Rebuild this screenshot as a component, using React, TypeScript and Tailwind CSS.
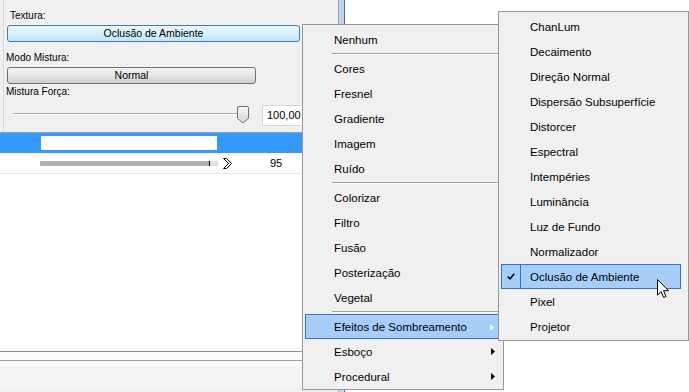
import React from "react";

const mainItems: (string | null)[] = [
  "Nenhum",
  null,
  "Cores",
  "Fresnel",
  "Gradiente",
  "Imagem",
  "Ruído",
  null,
  "Colorizar",
  "Filtro",
  "Fusão",
  "Posterização",
  "Vegetal",
  null,
  "Efeitos de Sombreamento",
  "Esboço",
  "Procedural",
];

const withArrow = ["Efeitos de Sombreamento", "Esboço", "Procedural"];

const subItems = [
  "ChanLum",
  "Decaimento",
  "Direção Normal",
  "Dispersão Subsuperfície",
  "Distorcer",
  "Espectral",
  "Intempéries",
  "Luminância",
  "Luz de Fundo",
  "Normalizador",
  "Oclusão de Ambiente",
  "Pixel",
  "Projetor",
];

const Arrow = ({ light }: { light?: boolean }) => (
  <svg width="4" height="7" viewBox="0 0 4 7" className="absolute right-[4px] top-[9px]">
    <polygon points="0,0 4,3.5 0,7" fill={light ? "#f6f6f6" : "#000000"} />
  </svg>
);

const MainMenu = () => (
  <div className="absolute left-[302px] top-[24px] w-[202px] h-[366px] bg-[#f0f0f0] border border-[#979797] pt-[2px] pl-[2px] pr-[2px]">
    {mainItems.map((item, i) =>
      item === null ? (
        <div key={i} className="h-[4px] flex flex-col justify-center ml-[27px] mr-[2px]">
          <div className="h-px bg-[#a0a0a0]" />
          <div className="h-px bg-white" />
        </div>
      ) : item === "Efeitos de Sombreamento" ? (
        <div
          key={i}
          className="relative h-[25px] w-[194px] flex items-center pt-[3px] pl-[28px] bg-[#a6cef8] border border-[#2f74c9] text-black"
        >
          {item}
          <Arrow light />
        </div>
      ) : (
        <div key={i} className="relative h-[25px] w-[194px] flex items-center pt-[3px] pl-[29px] text-black">
          {item}
          {withArrow.includes(item) && <Arrow />}
        </div>
      )
    )}
  </div>
);

const SubMenu = () => (
  <div className="absolute left-[498px] top-[11px] w-[191px] h-[330px] bg-[#f0f0f0] border border-[#979797] pt-[2px] pl-[2px]">
    {subItems.map((item) =>
      item === "Oclusão de Ambiente" ? (
        <div
          key={item}
          className="relative h-[25px] w-[180px] flex items-center pt-[3px] pl-[28px] bg-[#a6cef8] border border-[#2f74c9] text-black"
        >
          <div className="absolute left-0 top-0 bottom-0 w-[19px] border-r border-[#2f74c9] flex items-center justify-center">
            <svg width="8" height="7" viewBox="0 0 8 7">
              <path d="M0.8 3.6 L3 5.8 L7.2 0.8" fill="none" stroke="#000" strokeWidth="1.6" />
            </svg>
          </div>
          {item}
        </div>
      ) : (
        <div key={item} className="h-[25px] w-[180px] flex items-center pt-[3px] pl-[29px] text-black">
          {item}
        </div>
      )
    )}
  </div>
);

const Cursor = () => (
  <svg width="13" height="20" viewBox="0 0 13 20" className="absolute left-[657px] top-[279px]">
    <path
      d="M0.5 0.5 L0.5 16 L4.2 12.6 L6.7 18.5 L9 17.5 L6.6 11.7 L11.5 11.7 Z"
      fill="#ffffff"
      stroke="#000000"
      strokeWidth="1"
      strokeLinejoin="miter"
    />
  </svg>
);

const SliderThumb = () => (
  <svg width="12" height="18" viewBox="0 0 12 18" className="self-start mt-[1px]">
    <defs>
      <linearGradient id="thumb" x1="0" y1="0" x2="0" y2="1">
        <stop offset="0" stopColor="#f6f6f6" />
        <stop offset="1" stopColor="#d4d4d4" />
      </linearGradient>
    </defs>
    <path
      d="M0.5 2 Q0.5 0.5 2 0.5 H10 Q11.5 0.5 11.5 2 V12.5 L6 17 L0.5 12.5 Z"
      fill="url(#thumb)"
      stroke="#707070"
    />
  </svg>
);

const Chevron = () => (
  <svg width="9" height="11" viewBox="0 0 9 11">
    <path d="M0.5 0.5 H3.5 L8.5 5.5 L3.5 10.5 H0.5 L5.5 5.5 Z" fill="#ffffff" stroke="#000" />
    <path d="M2.5 2.5 L5.5 5.5 L2.5 8.5" fill="none" stroke="#000" />
  </svg>
);

export default function App() {
  return (
    <div className="relative w-[689px] h-[392px] overflow-hidden bg-white font-['Liberation_Sans',Arial,sans-serif] text-[11.5px] flex">
      <div className="w-[338px] h-full flex flex-col">
        <div className="h-[132px] bg-[#f0f0f0] pl-[3px]">
          <div className="h-full border-l border-[#d9d9d9] text-[10px] text-black">
            <div className="ml-[6px] pt-[10px] h-[21px] leading-[12px]">Textura:</div>
            <div className="ml-[3px] mt-[4px] w-[293px] h-[17px] rounded-[3px] border border-[#3c7fb1] bg-gradient-to-b from-[#eaf6fd] via-[#d9f0fc] to-[#bee6fd] flex items-center justify-center text-[10.5px]">
              Oclusão de Ambiente
            </div>
            <div className="ml-[2px] mt-[9px] pt-[1px] h-[12px] leading-[12px]">Modo Mistura:</div>
            <div className="ml-[3px] mt-[4px] w-[249px] h-[17px] rounded-[3px] border border-[#707070] bg-gradient-to-b from-[#f2f2f2] via-[#e6e6e6] to-[#cfcfcf] flex items-center justify-center text-[10.5px]">
              Normal
            </div>
            <div className="ml-[2px] mt-[1px] pt-[1px] h-[12px] leading-[12px]">Mistura Força:</div>
            <div className="flex mt-[8px] h-[21px]">
              <div className="ml-[9px] mt-[8px] w-[224px] h-[2px] border-t border-[#a8a8a8] border-b border-b-white self-start" />
              <SliderThumb />
              <div className="ml-[13px] w-[60px] h-[21px] bg-white border border-[#d5d5d5] flex items-center pl-[4px] text-[11px]">
                100,00
              </div>
            </div>
          </div>
        </div>
        <div className="border-t border-[#a0a0a0]">
          <div className="h-[20px] bg-[#3399ff] pt-[3px]">
            <div className="ml-[41px] w-[176px] h-[14px] bg-white" />
          </div>
          <div className="h-[21px] border-b border-[#e5e5e5] flex items-center text-[11px]">
            <div className="ml-[40px] w-[178px] h-[5px] flex">
              <div className="w-[169px] bg-[#b0b0b0]" />
              <div className="w-px bg-black" />
              <div className="flex-1 bg-[#e0e0e0]" />
            </div>
            <div className="ml-[5px] flex">
              <Chevron />
            </div>
            <div className="ml-[38px]">95</div>
          </div>
        </div>
        <div className="flex-1 bg-white" />
        <div className="border-t border-[#8f8f8f] h-[8px] bg-[#fbfbfb] box-content" />
        <div className="border-t border-[#a0a0a0] h-[5px] bg-white box-content" />
        <div className="h-[22px] bg-[#f4f4f4]" />
        <div className="h-[4px] bg-[#f0f0f0]" />
      </div>
      <div className="w-[7px] h-full bg-[#bfd2ec] border-l border-[#9aa7b8] border-r border-r-[#5d6b80]" />
      <div className="flex-1 bg-white" />
      <MainMenu />
      <SubMenu />
      <Cursor />
    </div>
  );
}
